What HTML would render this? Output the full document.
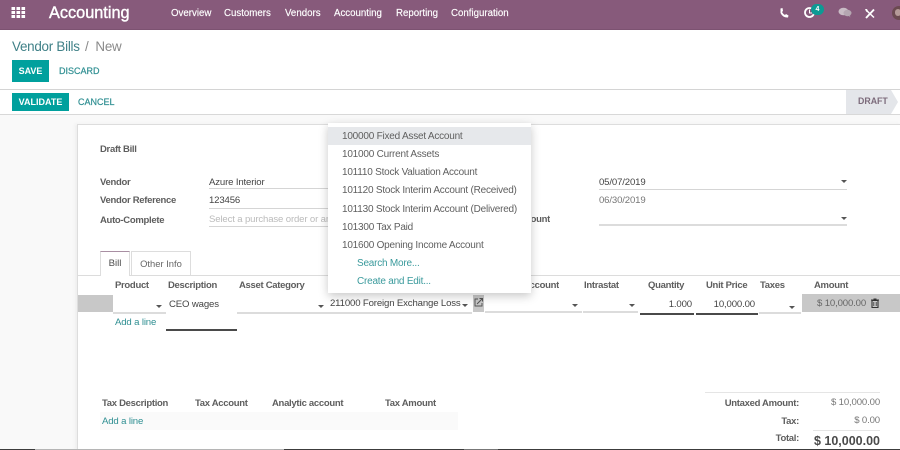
<!DOCTYPE html>
<html><head><meta charset="utf-8"><style>
html,body{margin:0;padding:0;width:900px;height:450px;overflow:hidden;background:#fff}
body{position:relative;font-family:"Liberation Sans",sans-serif;font-size:10px;color:#4c4c4c}
div{position:absolute;white-space:nowrap}
.n{color:#fff;top:7px;font-size:9.7px;line-height:13px;-webkit-text-stroke:.15px #fff}
.l{font-weight:bold;color:#5e5e5e;font-size:9.5px;line-height:12px;letter-spacing:-.3px}
.t{color:#2f8f92}
.v{font-size:9.6px;letter-spacing:-.15px;line-height:13px;color:#444}
.d{color:#5f5f5f;font-size:10px;left:342px;line-height:14px;letter-spacing:-.22px}
.u{height:1px;background:#d5d5d5}
.c{width:0;height:0;border-left:3px solid transparent;border-right:3px solid transparent;border-top:3px solid #555}
.b{background:#dcdcdc;height:1.5px}
.k{background:#4a4a4a;height:1.5px}
</style></head><body>
<div style="left:0;top:0;width:900px;height:29px;background:#875a7b"></div>
<div style="left:0;top:29px;width:900px;height:1px;background:#7c5271"></div>
<svg style="position:absolute;left:11px;top:6px" width="15" height="13"><g fill="#fff"><rect x="0.5" y="1" width="3.6" height="3"/><rect x="5.5" y="1" width="3.6" height="3"/><rect x="10.5" y="1" width="3.6" height="3"/><rect x="0.5" y="5" width="3.6" height="3"/><rect x="5.5" y="5" width="3.6" height="3"/><rect x="10.5" y="5" width="3.6" height="3"/><rect x="0.5" y="9" width="3.6" height="3"/><rect x="5.5" y="9" width="3.6" height="3"/><rect x="10.5" y="9" width="3.6" height="3"/></g></svg>
<div style="left:49px;top:3px;color:#fff;font-size:16.3px;line-height:20px;-webkit-text-stroke:.4px #fff">Accounting</div>
<div class="n" style="left:171px">Overview</div><div class="n" style="left:224px">Customers</div><div class="n" style="left:285px">Vendors</div><div class="n" style="left:334px">Accounting</div><div class="n" style="left:396px">Reporting</div><div class="n" style="left:451px">Configuration</div>
<svg style="position:absolute;left:778px;top:7px" width="12" height="12"><path d="M2.5 1.5 L4.5 1 L5 4 L4 5 Q5 7 7 8 L8 7 L10.5 8.5 L10 10.5 Q5 11 2.5 6 Z" fill="#fff"/></svg>
<svg style="position:absolute;left:803px;top:6px" width="13" height="13"><circle cx="6.5" cy="6.5" r="4.5" fill="none" stroke="#fff" stroke-width="1.8"/><path d="M6.5 3.5V7H9" fill="none" stroke="#fff" stroke-width="1"/></svg>
<div style="left:811px;top:4px;width:13px;height:11px;border-radius:6px;background:#0d9a94;color:#fff;font-size:7px;font-weight:bold;line-height:11px;text-align:center">4</div>
<svg style="position:absolute;left:838px;top:7px" width="14" height="11"><ellipse cx="5.5" cy="4.5" rx="5" ry="3.7" fill="#c9bcc5"/><ellipse cx="9.5" cy="6" rx="4" ry="3.2" fill="#b5a6b1"/><path d="M10 8l2.5 2.5L11 7z" fill="#b5a6b1"/></svg>
<svg style="position:absolute;left:864px;top:7px" width="12" height="13"><path d="M2 3L10 10.5" stroke="#fff" stroke-width="1.5"/><path d="M10 2.5L2 11" stroke="#fff" stroke-width="1.9"/><path d="M1 2l2 0 1 2-1.5 1z" fill="#fff"/></svg>
<div style="left:892px;top:6px;width:14px;height:14px;border-radius:7px;background:#6b4a50"></div>
<div style="left:895px;top:9px;width:6px;height:7px;border-radius:3px;background:#b59a98"></div>

<div style="left:12px;top:38px;font-size:13.4px;letter-spacing:-.25px;line-height:17px;color:#3f8087">Vendor Bills</div>
<div style="left:85px;top:38px;font-size:13.4px;letter-spacing:-.25px;line-height:17px;color:#8a8a8a">/&nbsp;&nbsp;New</div>
<div style="left:12px;top:60px;width:37px;height:22px;background:#00a09d;color:#fff;font-weight:bold;font-size:9px;line-height:22px;text-align:center">SAVE</div>
<div class="t" style="left:59px;top:65px;font-size:9px;line-height:13px;-webkit-text-stroke:.2px #2f8f92">DISCARD</div>
<div style="left:0;top:89px;width:900px;height:1px;background:#d4d4d4"></div>
<div style="left:12px;top:93px;width:57px;height:18px;background:#00a09d;color:#fff;font-weight:bold;font-size:9px;line-height:18px;text-align:center">VALIDATE</div>
<div class="t" style="left:78px;top:96px;font-size:9px;line-height:13px;-webkit-text-stroke:.2px #2f8f92">CANCEL</div>
<svg style="position:absolute;left:846px;top:90px" width="54" height="24"><path d="M0 0H45L52 12L45 24H0Z" fill="#e4e6ea"/></svg>
<div style="left:858px;top:95px;font-size:8.8px;font-weight:bold;line-height:13px;color:#7c6b7b">DRAFT</div>
<div style="left:0;top:114px;width:900px;height:1px;background:#d8d8d8"></div>
<div style="left:0;top:115px;width:900px;height:334px;background:#f9f9f9"></div>
<div style="left:77px;top:124px;width:823px;height:325px;background:#fff;border-left:1px solid #ddd;border-top:1px solid #ddd;box-shadow:-2px 0 3px #eee"></div>

<div class="l" style="left:100px;top:144px;">Draft Bill</div>
<div class="l" style="left:100px;top:177px">Vendor</div>
<div class="l" style="left:100px;top:195px">Vendor Reference</div>
<div class="l" style="left:100px;top:215px">Auto-Complete</div>
<div class="v" style="left:209px;top:176px">Azure Interior</div>
<div class="u" style="left:209px;top:188px;width:120px"></div>
<div class="v" style="left:209px;top:194px">123456</div>
<div class="u" style="left:209px;top:208px;width:120px"></div>
<div class="v" style="left:209px;top:213px;color:#bbb;width:119px;overflow:hidden">Select a purchase order or an old bill</div>
<div class="u" style="left:209px;top:226px;width:120px"></div>
<div class="v" style="left:599px;top:176px">05/07/2019</div>
<div class="c" style="left:841px;top:180px"></div>
<div class="u" style="left:599px;top:189px;width:248px"></div>
<div class="v" style="left:599px;top:194px;color:#777">06/30/2019</div>
<div class="l" style="left:532px;top:214px;width:18px;overflow:hidden;direction:rtl">ount</div>
<div class="c" style="left:841px;top:217px"></div>
<div class="b" style="left:599px;top:224px;width:248px"></div>

<div style="left:78px;top:275px;width:822px;height:1px;background:#dcdcdc"></div>
<div style="left:100px;top:251px;width:30px;height:25px;background:#fff;border:1px solid #ddd;border-top:1px solid #a98fa3;border-bottom:0;box-sizing:border-box;line-height:23px;text-align:center;color:#4c4c4c;font-size:9.6px">Bill</div>
<div style="left:131px;top:251px;width:60px;height:24px;background:#fff;border:1px solid #ddd;border-bottom:0;box-sizing:border-box;line-height:23px;text-align:center;color:#666;font-size:9.4px">Other Info</div>
<div class="l" style="left:115px;top:280px">Product</div><div class="l" style="left:168px;top:280px">Description</div><div class="l" style="left:239px;top:280px">Asset Category</div>
<div class="l" style="left:532px;top:280px;width:27px;overflow:hidden;direction:rtl">ccount</div><div class="l" style="left:584px;top:280px">Intrastat</div><div class="l" style="left:648px;top:280px">Quantity</div><div class="l" style="left:706px;top:280px">Unit Price</div><div class="l" style="left:760px;top:280px">Taxes</div><div class="l" style="left:814px;top:280px">Amount</div>

<div style="left:78px;top:295px;width:35px;height:17px;background:#c8c8c8"></div>
<div style="left:473px;top:295px;width:11px;height:17px;background:#c8c8c8"></div>
<div style="left:802px;top:294px;width:98px;height:18px;background:#c8c8c8"></div>
<div class="c" style="left:156px;top:305px"></div>
<div class="b" style="left:113px;top:312px;width:53px"></div>
<div class="v" style="left:169px;top:298px">CEO wages</div>
<div class="k" style="left:166px;top:329px;width:71px"></div>
<div class="c" style="left:318px;top:305px"></div>
<div class="b" style="left:237px;top:312px;width:90px"></div>
<div class="v" style="left:330px;top:297px">211000 Foreign Exchange Loss</div>
<div class="c" style="left:462px;top:304px"></div>
<div class="b" style="left:327px;top:312px;width:145px"></div>
<svg style="position:absolute;left:473px;top:297px" width="11" height="11"><path d="M5 2H2V9H9V6" fill="none" stroke="#555" stroke-width="1"/><path d="M4 7L9 2M6.5 1.5H9.5V4.5" fill="none" stroke="#555" stroke-width="1"/></svg>
<div class="c" style="left:572px;top:304px"></div>
<div class="b" style="left:485px;top:311px;width:97px"></div>
<div class="c" style="left:629px;top:304px"></div>
<div class="b" style="left:583px;top:311px;width:55px"></div>
<div class="v" style="left:640px;top:298px;width:52px;text-align:right">1.000</div>
<div class="k" style="left:640px;top:313px;width:54px"></div>
<div class="v" style="left:696px;top:298px;width:59px;text-align:right">10,000.00</div>
<div class="k" style="left:696px;top:313px;width:62px"></div>
<div class="c" style="left:789px;top:306px"></div>
<div class="b" style="left:759px;top:312px;width:42px"></div>
<div class="v" style="left:817px;top:297px;color:#666">$ 10,000.00</div>
<svg style="position:absolute;left:870px;top:298px" width="10" height="11"><path d="M2 2.5H8V9.5H2ZM1 2H9M3.5 1H6.5" fill="none" stroke="#333" stroke-width="1.1"/><path d="M3.8 4V8M6.2 4V8" stroke="#333" stroke-width=".8"/></svg>
<div class="v t" style="left:115px;top:316px;color:#2f8f92">Add a line</div>

<div class="l" style="left:102px;top:398px">Tax Description</div><div class="l" style="left:195px;top:398px">Tax Account</div><div class="l" style="left:272px;top:398px">Analytic account</div><div class="l" style="left:385px;top:398px">Tax Amount</div>
<div style="left:100px;top:412px;width:358px;height:18px;background:#fafafa"></div>
<div class="v" style="left:102px;top:415px;color:#2f8f92">Add a line</div>

<div style="left:705px;top:392px;width:175px;height:1px;background:#e5e5e5"></div>
<div class="l" style="left:700px;width:99px;text-align:right;top:398px">Untaxed Amount:</div>
<div class="v" style="left:800px;width:80px;text-align:right;top:396px;color:#777">$ 10,000.00</div>
<div class="l" style="left:700px;width:99px;text-align:right;top:416px">Tax:</div>
<div class="v" style="left:800px;width:80px;text-align:right;top:414px;color:#777">$ 0.00</div>
<div style="left:813px;top:430px;width:67px;height:1px;background:#e5e5e5"></div>
<div class="l" style="left:700px;width:99px;text-align:right;top:433px">Total:</div>
<div style="left:790px;width:90px;text-align:right;top:433px;line-height:16px;font-size:12.5px;font-weight:bold;color:#4a4a4a">$ 10,000.00</div>

<div style="left:328px;top:123px;width:203px;height:170px;background:#fff;box-shadow:0 3px 9px rgba(0,0,0,.22)"></div>
<div style="left:328px;top:127px;width:203px;height:18px;background:#e6e8eb"></div>
<div class="d" style="top:130px">100000 Fixed Asset Account</div>
<div class="d" style="top:148px">101000 Current Assets</div>
<div class="d" style="top:166px">101110 Stock Valuation Account</div>
<div class="d" style="top:184px">101120 Stock Interim Account (Received)</div>
<div class="d" style="top:203px">101130 Stock Interim Account (Delivered)</div>
<div class="d" style="top:221px">101300 Tax Paid</div>
<div class="d" style="top:239px">101600 Opening Income Account</div>
<div class="d" style="top:257px;left:357px;color:#3a9a9c">Search More...</div>
<div class="d" style="top:275px;left:357px;color:#3a9a9c">Create and Edit...</div>

<div style="left:0;top:449px;width:900px;height:1px;background:#3c3c3c"></div>
<div style="left:35px;top:449px;width:249px;height:1px;background:#b5b5b5"></div>
<div style="left:464px;top:449px;width:34px;height:1px;background:#777"></div>
</body></html>
